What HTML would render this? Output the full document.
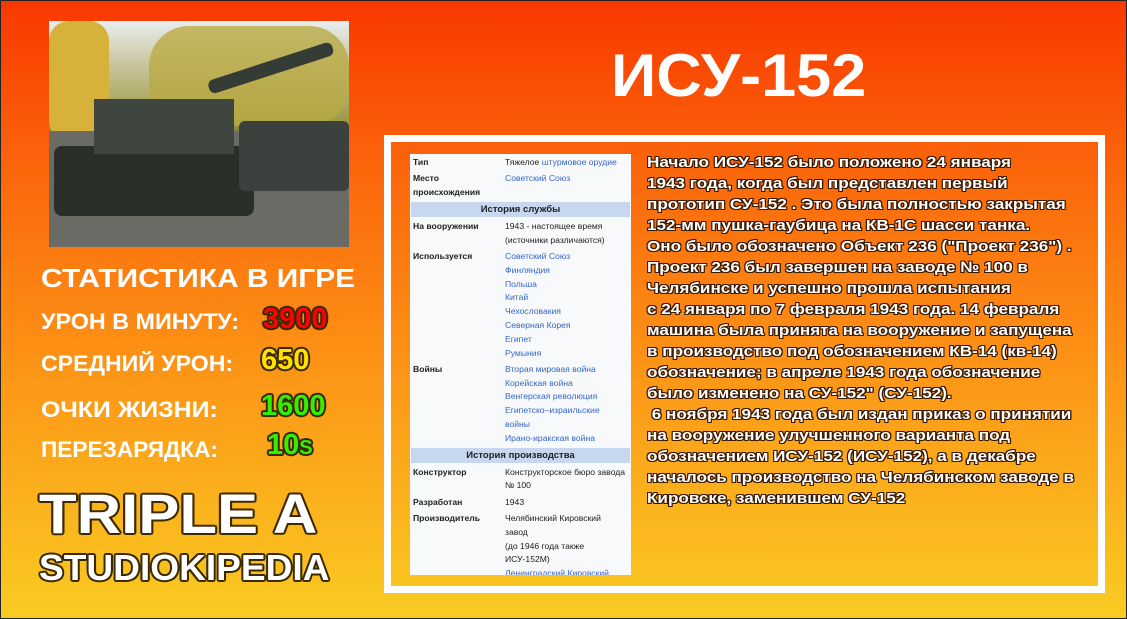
<!DOCTYPE html>
<html><head><meta charset="utf-8"><style>
*{margin:0;padding:0;box-sizing:border-box}
body{width:1127px;height:619px;overflow:hidden;position:relative;font-family:"Liberation Sans",sans-serif;
background:linear-gradient(180deg,#f83800 0%,#fb6a0c 30%,#fc9c18 65%,#f9cb22 100%);border:1px solid #222}
.img{position:absolute;left:48px;top:20px;width:300px;height:226px;overflow:hidden;
background:linear-gradient(180deg,#e8eef0 0%,#c9c39a 20%,#9a9a40 45%,#556040 55%,#6e6e66 75%,#77756d 100%)}
.t{position:absolute;color:#fff;font-weight:900;font-family:"Liberation Sans",sans-serif;text-transform:uppercase;transform-origin:left top;white-space:nowrap}
.o{text-shadow:2px 0 0 #3a2a00,-2px 0 0 #3a2a00,0 2px 0 #3a2a00,0 -2px 0 #3a2a00,1.5px 1.5px 0 #3a2a00,-1.5px -1.5px 0 #3a2a00,1.5px -1.5px 0 #3a2a00,-1.5px 1.5px 0 #3a2a00}
.box{position:absolute;left:383px;top:134px;width:721px;height:458px;border:7px solid #fff}
.info{position:absolute;left:409px;top:153px;width:221px;height:421px;background:#f8f9fa;font-size:8.6px;line-height:13.8px;color:#202122;overflow:hidden;padding-top:2px}
.info .r{display:flex;padding-left:3px;margin-bottom:2.5px}
.info .k{width:92px;flex:none;font-weight:bold}
.info .v{width:126px}
.info a{color:#3366cc}
.info .h{background:#c6d7ef;text-align:center;font-weight:bold;margin:0 1px 2.5px;font-size:9.5px;line-height:15px}
.txt{position:absolute;left:646px;top:151px;width:400px;color:#fff;font-size:15px;font-weight:bold;line-height:21px;white-space:nowrap;transform:scaleX(1.14);transform-origin:left top;
text-shadow:1px 1px 0 #3a1a00,-1px -1px 0 #3a1a00,1px -1px 0 #3a1a00,-1px 1px 0 #3a1a00,0 1px 0 #3a1a00,0 -1px 0 #3a1a00,1px 0 0 #3a1a00,-1px 0 0 #3a1a00}
</style></head><body>
<div class="img">
<div style="position:absolute;left:0;top:0;width:60px;height:120px;background:#d6b23a;border-radius:20px"></div>
<div style="position:absolute;left:100px;top:5px;width:200px;height:100px;background:#b9aa45;border-radius:40px;opacity:.8"></div>
<div style="position:absolute;left:0;top:110px;width:300px;height:116px;background:#6b6b66"></div>
<div style="position:absolute;left:5px;top:125px;width:200px;height:70px;background:#2b2f2a;border-radius:8px"></div>
<div style="position:absolute;left:45px;top:78px;width:140px;height:55px;background:#3f463f"></div>
<div style="position:absolute;left:160px;top:60px;width:130px;height:14px;background:#353b35;transform:rotate(-18deg);transform-origin:left center;border-radius:6px"></div>
<div style="position:absolute;left:190px;top:100px;width:110px;height:70px;background:#3b413c;border-radius:6px"></div>
</div>
<div class="t" style="left:610px;top:40px;font-size:60px;transform:scaleX(1.05)">ИСУ-152</div>
<div class="t" style="left:40px;top:262px;font-size:26px;transform:scaleX(1.15)">Статистика в игре</div>
<div class="t" style="left:40px;top:308px;font-size:22px;transform:scaleX(1.06)">Урон в минуту:</div>
<div class="t o" style="left:262px;top:302px;font-size:29px;color:#f00">3900</div>
<div class="t" style="left:40px;top:350px;font-size:22px;transform:scaleX(1.05)">Средний урон:</div>
<div class="t o" style="left:260px;top:343px;font-size:29px;color:#ffe000">650</div>
<div class="t" style="left:40px;top:396px;font-size:22px;transform:scaleX(1.13)">Очки жизни:</div>
<div class="t o" style="left:260px;top:389px;font-size:29px;color:#33f000">1600</div>
<div class="t" style="left:40px;top:436px;font-size:22px;transform:scaleX(1.03)">Перезарядка:</div>
<div class="t o" style="left:266px;top:428px;font-size:29px;color:#33f000">10<span style="font-size:20px">s</span></div>
<div class="t o" style="left:38px;top:480px;font-size:56px;transform:scaleX(1.1)">TRIPLE A</div>
<div class="t o" style="left:38px;top:546px;font-size:36px;transform:scaleX(1.03)">STUDIOKIPEDIA</div>
<div class="box"></div>
<div class="info">
<div class="r"><div class="k">Тип</div><div class="v">Тяжелое <a>штурмовое орудие</a></div></div>
<div class="r"><div class="k">Место происхождения</div><div class="v"><a>Советский Союз</a></div></div>
<div class="h">История службы</div>
<div class="r"><div class="k">На вооружении</div><div class="v">1943 - настоящее время (источники различаются)</div></div>
<div class="r"><div class="k">Используется</div><div class="v"><a>Советский Союз<br>Финляндия<br>Польша<br>Китай<br>Чехословакия<br>Северная Корея<br>Египет<br>Румыния</a></div></div>
<div class="r"><div class="k">Войны</div><div class="v"><a>Вторая мировая война<br>Корейская война<br>Венгерская революция<br>Египетско–израильские<br>войны<br>Ирано-иракская война</a></div></div>
<div class="h">История производства</div>
<div class="r"><div class="k">Конструктор</div><div class="v">Конструкторское бюро завода<br>№ 100</div></div>
<div class="r"><div class="k">Разработан</div><div class="v">1943</div></div>
<div class="r"><div class="k">Производитель</div><div class="v">Челябинский Кировский<br>завод<br>(до 1946 года также<br>ИСУ-152М)<br><a>Ленинградский Кировский</a></div></div>
</div>
<div class="txt">Начало ИСУ-152 было положено 24 января<br>1943 года, когда был представлен первый<br>прототип СУ-152 . Это была полностью закрытая<br>152-мм пушка-гаубица на КВ-1С шасси танка.<br>Оно было обозначено Объект 236 ("Проект 236") .<br>Проект 236 был завершен на заводе № 100 в<br>Челябинске и успешно прошла испытания<br>с 24 января по 7 февраля 1943 года. 14 февраля<br>машина была принята на вооружение и запущена<br>в производство под обозначением КВ-14 (кв-14)<br>обозначение; в апреле 1943 года обозначение<br>было изменено на СУ-152" (СУ-152).<br>&nbsp;6 ноября 1943 года был издан приказ о принятии<br>на вооружение улучшенного варианта под<br>обозначением ИСУ-152 (ИСУ-152), а в декабре<br>началось производство на Челябинском заводе в<br>Кировске, заменившем СУ-152</div>
</body></html>
